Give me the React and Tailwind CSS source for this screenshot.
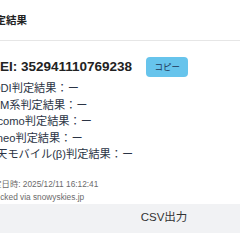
import React from 'react';

const results = [
  'KDDI判定結果：ー',
  'SBM系判定結果：ー',
  'docomo判定結果：ー',
  'mineo判定結果：ー',
  '楽天モバイル(β)判定結果：ー',
];

const ResultModal = () => {
  return (
    <div className="w-[390px] -ml-[31px] bg-white font-['Liberation_Sans','Noto_Sans_CJK_JP',sans-serif]">
      {/* header */}
      <div className="h-[41px] px-4 pt-[2px] flex items-center border-b border-[#e6e6e6]">
        <h2 className="text-[10.5px] font-bold text-[#222]">判定結果</h2>
      </div>

      <div className="px-4 pt-4">
        <div className="h-[20px] flex items-center">
          <span className="text-[13.5px] font-bold text-[#222] leading-none">IMEI: 352941110769238</span>
          <button className="ml-[14px] h-[20px] w-[42px] rounded-[4px] bg-[#67c4ec] text-[8.5px] text-[#1d3557] flex items-center justify-center">
            コピー
          </button>
        </div>

        <ul className="mt-[3px]">
          {results.map((r) => (
            <li key={r} className="text-[11.2px] leading-[16.5px] text-[#2b3445]">
              {r}
            </li>
          ))}
        </ul>

        <div className="mt-[15px] text-[8.3px] leading-[13px] text-[#6b6b6b]">
          <p>判定日時: 2025/12/11 16:12:41</p>
          <p>Checked via snowyskies.jp</p>
        </div>
      </div>

      {/* footer */}
      <div className="h-[29px] bg-[#f1f2f4] flex items-center justify-center">
        <span className="text-[11.5px] text-[#333]">CSV出力</span>
      </div>
    </div>
  );
};

export default function App() {
  return (
    <div className="w-[240px] h-[240px] overflow-hidden bg-white">
      <ResultModal />
    </div>
  );
}
